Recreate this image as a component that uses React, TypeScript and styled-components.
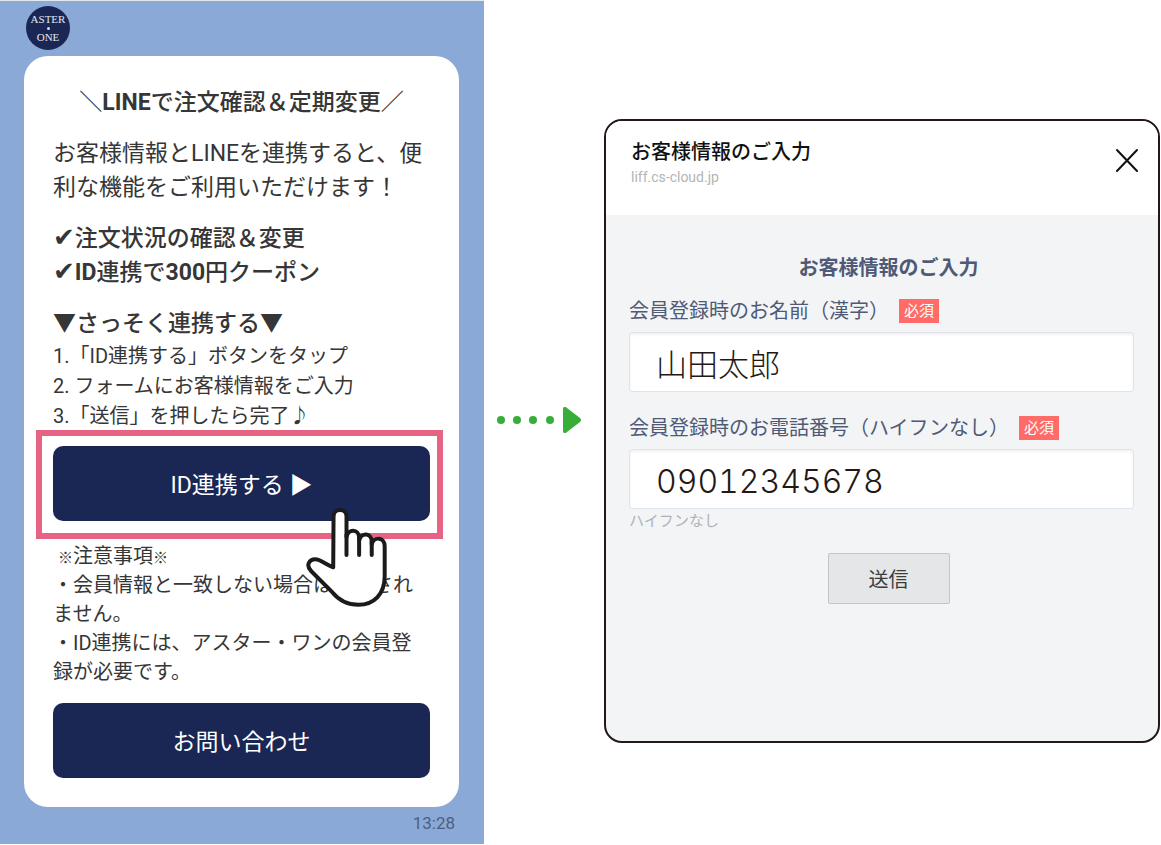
import React from "react";
import styled, { createGlobalStyle } from "styled-components";

const GlobalStyle = createGlobalStyle`
  *, *::before, *::after { box-sizing: border-box; }
  body {
    margin: 0;
    background: #fff;
    font-family: Roboto, "Noto Sans CJK JP", sans-serif;
  }
  h1, h2, h3, p, ul, ol { margin: 0; padding: 0; font-weight: inherit; }
  button, input { font-family: inherit; }
`;

const navy = "#1a2755";

const Page = styled.main`
  display: grid;
  grid-template-columns: minmax(0, 484fr) 120px minmax(0, 557fr);
  align-items: center;
`;

/* ---------- chat side ---------- */

const Chat = styled.section`
  background: #8ba9d6;
  border-top: 1px solid #e3e8ee;
  padding: 5px 25px 10px 24px;
  display: flex;
  flex-direction: column;
`;

const Avatar = styled.div`
  width: 44px;
  height: 44px;
  margin: 0 0 6px 2px;
  border-radius: 50%;
  background: ${navy};
  color: #e4e7f2;
  font-family: "Liberation Serif", serif;
  font-size: 11px;
  line-height: 11px;
  display: flex;
  flex-direction: column;
  align-items: center;
  justify-content: center;
  gap: 2px;
`;

const AvatarDot = styled.span`
  width: 3px;
  height: 3px;
  border-radius: 50%;
  background: #cfe0f0;
`;

const Bubble = styled.article`
  background: #fff;
  border-radius: 24px;
  padding: 30px 29px 29px 29px;
  color: #363636;
`;

const Lead = styled.div<{ $strong?: boolean; $center?: boolean; $last?: boolean }>`
  font-size: 23px;
  line-height: 34px;
  font-weight: ${(p) => (p.$strong ? 500 : 400)};
  text-align: ${(p) => (p.$center ? "center" : "left")};
  margin-bottom: ${(p) => (p.$last ? 0 : 17)}px;
`;

const Check = styled.span`
  font-family: "DejaVu Sans", sans-serif;
  font-size: 26px;
  line-height: 26px;
  font-weight: 700;
`;

const Steps = styled.ol`
  list-style: none;
  font-size: 20px;
  line-height: 30px;
`;

const Highlight = styled.div`
  position: relative;
  margin: -1px -13px 0 -17px;
  border: 6px solid #e66383;
  padding: 10px 7px 12px 11px;
`;

const ChatButton = styled.button`
  display: block;
  width: 100%;
  height: 75px;
  border: 0;
  border-radius: 10px;
  padding: 4px 0 0;
  background: ${navy};
  color: #fff;
  font-size: 23px;
  line-height: 34px;
`;

const Pointer = styled.svg`
  position: absolute;
  right: 49px;
  top: 71px;
  width: 83px;
  height: 100px;
  pointer-events: none;
`;

const Notes = styled.div`
  font-size: 20px;
  line-height: 29px;
  padding: 3px 0 16px;
  white-space: pre-wrap;
`;

const Mark = styled.span`
  font-size: 15px;
  line-height: 15px;
`;

const Time = styled.time`
  align-self: flex-end;
  margin: 5px 4px 0 0;
  font-size: 17px;
  line-height: 22px;
  color: #4b5f82;
`;

/* ---------- arrow ---------- */

const Arrow = styled.svg`
  display: block;
  width: 84px;
  height: 26px;
  margin: 0 auto 4px 13px;
`;

/* ---------- form side ---------- */

const Card = styled.section`
  margin: 18px 1px 0 0;
  border: 2px solid #231815;
  border-radius: 18px;
  overflow: hidden;
  background: #f3f4f6;
`;

const CardHeader = styled.header`
  display: flex;
  justify-content: space-between;
  align-items: flex-start;
  background: #fff;
  padding: 17px 18px 27px 25px;
`;

const CardTitle = styled.h1`
  font-size: 20px;
  line-height: 28px;
  font-weight: 500;
  color: #111;
`;

const Domain = styled.p`
  font-size: 14px;
  line-height: 22px;
  color: #b4b4b4;
`;

const Close = styled.button`
  border: 0;
  background: none;
  padding: 0;
  margin-top: 9px;
  width: 26px;
  height: 26px;
  svg { display: block; }
`;

const Form = styled.form`
  padding: 38px 24px 137px 23px;
  color: #4f5b76;
  display: flex;
  flex-direction: column;
`;

const CenterRow = styled.div`
  display: flex;
  justify-content: center;
  padding-left: 14px;
`;

const FormTitle = styled.h2`
  font-size: 20px;
  line-height: 30px;
  font-weight: 700;
  margin-bottom: 14px;
`;

const Field = styled.div<{ $spaced?: boolean }>`
  display: flex;
  flex-direction: column;
  margin-top: ${(p) => (p.$spaced ? 22 : 0)}px;
`;

const LabelRow = styled.div`
  display: flex;
  align-items: center;
  gap: 10px;
  margin-bottom: 7px;
  font-size: 20px;
  line-height: 28px;
`;

const Required = styled.span`
  background: #ff6b66;
  color: #fff;
  font-size: 15px;
  line-height: 24px;
  padding: 0 5px;
`;

const TextBox = styled.input<{ $digits?: boolean }>`
  width: 100%;
  height: 60px;
  padding: ${(p) => (p.$digits ? "4px 26px 0" : "0 26px")};
  border: 1px solid #dfe3ec;
  border-radius: 3px;
  background: #fff;
  box-shadow: inset 0 2px 3px rgba(60, 60, 80, 0.07);
  color: #231815;
  font-family: ${(p) => (p.$digits ? 'Inter, sans-serif' : '"Noto Sans CJK JP", sans-serif')};
  font-size: ${(p) => (p.$digits ? 32 : 31)}px;
  font-weight: 300;
  font-variant-numeric: tabular-nums;
`;

const Hint = styled.p`
  font-size: 15px;
  line-height: 24px;
  color: #adb3b8;
`;

const Submit = styled.button`
  width: 122px;
  height: 51px;
  margin-top: 20px;
  border: 1px solid #c2c4c6;
  border-radius: 2px;
  background: #e5e6e8;
  color: #3c3c3c;
  font-size: 20px;
`;

export default function App() {
  return (
    <>
      <GlobalStyle />
      <Page>
        <Chat>
          <Avatar>
            <span>ASTER</span>
            <AvatarDot />
            <span>ONE</span>
          </Avatar>
          <Bubble>
            <Lead as="h2" $strong $center>＼<b>LINE</b>で注文確認＆定期変更／</Lead>
            <Lead as="p">お客様情報とLINEを連携すると、便利な機能をご利用いただけます！</Lead>
            <Lead $strong>
              <p><Check>✔</Check>注文状況の確認＆変更</p>
              <p><Check>✔</Check><b>ID</b>連携で<b>300</b>円クーポン</p>
            </Lead>
            <Lead as="h3" $strong $last>▼さっそく連携する▼</Lead>
            <Steps>
              <li>1.「ID連携する」ボタンをタップ</li>
              <li>2. フォームにお客様情報をご入力</li>
              <li>3.「送信」を押したら完了♪</li>
            </Steps>
            <Highlight>
              <ChatButton type="button">ID連携する ▶</ChatButton>
              <Pointer viewBox="855 262 250 300" aria-hidden="true">
                <path
                  d="M940 443 L941 290 C941 264 980 264 980 290 L980 352 C984 326 1018 326 1018 354 L1018 362 C1024 338 1056 338 1056 366 L1056 374 C1062 350 1095 350 1095 380 L1095 470 C1095 525 1062 556 1016 556 C982 556 957 542 937 518 L874 455 C856 437 868 419 886 419 C902 419 916 434 940 443 Z"
                  fill="#fff"
                  stroke="#1b1b1b"
                  strokeWidth="12"
                  strokeLinejoin="round"
                />
                <path
                  d="M980 345 V406 M1018 354 V406 M1056 366 V406"
                  fill="none"
                  stroke="#1b1b1b"
                  strokeWidth="12"
                  strokeLinecap="round"
                />
              </Pointer>
            </Highlight>
            <Notes>
              <p>{" "}<Mark>※</Mark>注意事項<Mark>※</Mark></p>
              <p>・会員情報と一致しない場合は連携されません。</p>
              <p>・ID連携には、アスター・ワンの会員登録が必要です。</p>
            </Notes>
            <ChatButton type="button">お問い合わせ</ChatButton>
          </Bubble>
          <Time>13:28</Time>
        </Chat>

        <Arrow viewBox="0 0 84 26" aria-hidden="true">
          <g fill="#36ae38">
            <circle cx="4" cy="13" r="4" />
            <circle cx="20" cy="13" r="4" />
            <circle cx="36" cy="13" r="4" />
            <circle cx="53" cy="13" r="4" />
            <path d="M66 2 C66 0 68 -1 70 1 L83 11 Q85 13 83 15 L70 25 C68 27 66 26 66 24 Z" />
          </g>
        </Arrow>

        <Card>
          <CardHeader>
            <div>
              <CardTitle>お客様情報のご入力</CardTitle>
              <Domain>liff.cs-cloud.jp</Domain>
            </div>
            <Close type="button" aria-label="閉じる">
              <svg width="26" height="26" viewBox="0 0 26 26">
                <path d="M3 3 L23 24 M23 3 L3 24" stroke="#111" strokeWidth="2" strokeLinecap="round" />
              </svg>
            </Close>
          </CardHeader>
          <Form>
            <CenterRow>
              <FormTitle>お客様情報のご入力</FormTitle>
            </CenterRow>
            <Field>
              <LabelRow>
                <label htmlFor="name">会員登録時のお名前（漢字）</label>
                <Required>必須</Required>
              </LabelRow>
              <TextBox id="name" type="text" defaultValue="山田太郎" />
            </Field>
            <Field $spaced>
              <LabelRow>
                <label htmlFor="phone">会員登録時のお電話番号（ハイフンなし）</label>
                <Required>必須</Required>
              </LabelRow>
              <TextBox id="phone" type="tel" $digits defaultValue="09012345678" aria-describedby="phone-hint" />
              <Hint id="phone-hint">ハイフンなし</Hint>
            </Field>
            <CenterRow>
              <Submit type="button">送信</Submit>
            </CenterRow>
          </Form>
        </Card>
      </Page>
    </>
  );
}
